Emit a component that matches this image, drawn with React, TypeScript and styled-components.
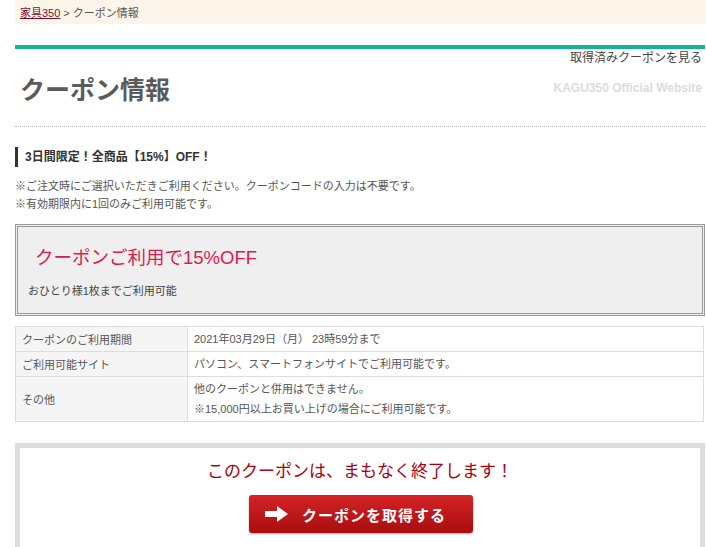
import { FC } from 'react';
import styled, { createGlobalStyle } from 'styled-components';

const GlobalStyle = createGlobalStyle`
  body {
    margin: 0;
    background: #ffffff;
    font-family: "Liberation Sans", "Noto Sans CJK JP", sans-serif;
    color: #555555;
  }
`

const Page = styled.div`
  padding: 0 1px 0 15px;
`

const Breadcrumb = styled.div`
  display: flex;
  align-items: center;
  height: 24px;
  padding-left: 5px;
  background: #fdf4ea;
  font-size: 11px;
  color: #555555;
`

const CrumbLink = styled.a`
  color: #7a0c2e;
  text-decoration: underline;
  margin-right: 3px;
`

const GreenRule = styled.div`
  margin-top: 21px;
  height: 4px;
  background: #17b294;
`

const TopLink = styled.div`
  text-align: right;
  font-size: 12px;
  line-height: 16px;
  padding: 1px 3px 0 0;
  color: #444444;
`

const TitleRow = styled.div`
  display: flex;
  align-items: center;
  justify-content: space-between;
  height: 44px;
  padding: 0 3px 16px 5px;
  border-bottom: 1px dotted #b5b5b5;
  margin-bottom: 20px;
`

const PageTitle = styled.h1`
  margin: 0;
  font-size: 25px;
  font-weight: bold;
  color: #5a5a5a;
`

const SiteName = styled.span`
  font-size: 12px;
  font-weight: bold;
  color: #dcdcdc;
`

const SubHeading = styled.h2`
  margin: 0 0 10px;
  padding-left: 7px;
  border-left: 3px solid #333333;
  font-size: 12px;
  line-height: 20px;
  font-weight: bold;
  color: #333333;
`

const Note = styled.p`
  margin: 0;
  font-size: 11px;
  line-height: 18px;
  color: #555555;
`

const CouponBox = styled.div`
  box-sizing: border-box;
  margin-top: 11px;
  height: 92px;
  border: 3px double #999999;
  background: #efefef;
  padding: 19px 0 0 10px;
`

const CouponTitle = styled.div`
  padding-left: 7px;
  font-size: 18.5px;
  line-height: 24px;
  color: #e0184e;
`

const CouponSub = styled.div`
  margin-top: 12px;
  font-size: 11px;
  color: #444444;
`

const InfoTable = styled.table`
  width: calc(100% - 1px);
  margin-top: 10px;
  border-collapse: collapse;
  font-size: 11px;
  color: #555555;
`

const LabelCell = styled.th<{ $tall?: boolean }>`
  width: 159px;
  padding: 0 6px;
  text-align: left;
  font-weight: normal;
  background: #f5f5f5;
  border: 1px solid #dddddd;
  height: ${p => (p.$tall ? '44px' : '24px')};
`

const ValueCell = styled.td`
  padding: 0 6px;
  border: 1px solid #dddddd;
  height: 24px;
  line-height: 20px;
`

const Line = styled.div`
  line-height: 20px;
`

const EndBox = styled.div`
  margin-top: 21px;
  border: 5px solid #dddddd;
  border-bottom: none;
  padding: 11px 0 20px;
  display: flex;
  flex-direction: column;
  align-items: center;
`

const EndText = styled.div`
  font-size: 17px;
  line-height: 26px;
  color: #a8000e;
`

const GetButton = styled.button`
  margin-top: 10px;
  margin-left: 2px;
  width: 224px;
  height: 38px;
  display: flex;
  align-items: center;
  gap: 14px;
  padding: 0 0 0 16px;
  border: none;
  border-radius: 3px;
  background: linear-gradient(#d42326, #a90d10);
  box-shadow: 0 1px 2px rgba(0, 0, 0, 0.35);
  color: #ffffff;
  font-family: "Liberation Sans", "Noto Sans CJK JP", sans-serif;
  font-size: 15px;
  font-weight: bold;
  letter-spacing: 1px;
  cursor: pointer;
`

const Arrow: FC = () => (
  <svg width="23" height="16" viewBox="0 0 23 16">
    <path d="M0 5h12V0l11 8-11 8v-5H0z" fill="#ffffff" />
  </svg>
)

const App: FC = () => {
  return (
    <>
      <GlobalStyle />
      <Page>
        <Breadcrumb>
          <CrumbLink href="#">家具350</CrumbLink>&gt; クーポン情報
        </Breadcrumb>
        <GreenRule />
        <TopLink>取得済みクーポンを見る</TopLink>
        <TitleRow>
          <PageTitle>クーポン情報</PageTitle>
          <SiteName>KAGU350 Official Website</SiteName>
        </TitleRow>
        <SubHeading>3日間限定！全商品【15%】OFF！</SubHeading>
        <Note>※ご注文時にご選択いただきご利用ください。クーポンコードの入力は不要です。</Note>
        <Note>※有効期限内に1回のみご利用可能です。</Note>
        <CouponBox>
          <CouponTitle>クーポンご利用で15%OFF</CouponTitle>
          <CouponSub>おひとり様1枚までご利用可能</CouponSub>
        </CouponBox>
        <InfoTable>
          <tbody>
            <tr>
              <LabelCell>クーポンのご利用期間</LabelCell>
              <ValueCell>2021年03月29日（月） 23時59分まで</ValueCell>
            </tr>
            <tr>
              <LabelCell>ご利用可能サイト</LabelCell>
              <ValueCell>パソコン、スマートフォンサイトでご利用可能です。</ValueCell>
            </tr>
            <tr>
              <LabelCell $tall>その他</LabelCell>
              <ValueCell>
                <Line>他のクーポンと併用はできません。</Line>
                <Line>※15,000円以上お買い上げの場合にご利用可能です。</Line>
              </ValueCell>
            </tr>
          </tbody>
        </InfoTable>
        <EndBox>
          <EndText>このクーポンは、まもなく終了します！</EndText>
          <GetButton>
            <Arrow />
            クーポンを取得する
          </GetButton>
        </EndBox>
      </Page>
    </>
  )
}

export default App;
